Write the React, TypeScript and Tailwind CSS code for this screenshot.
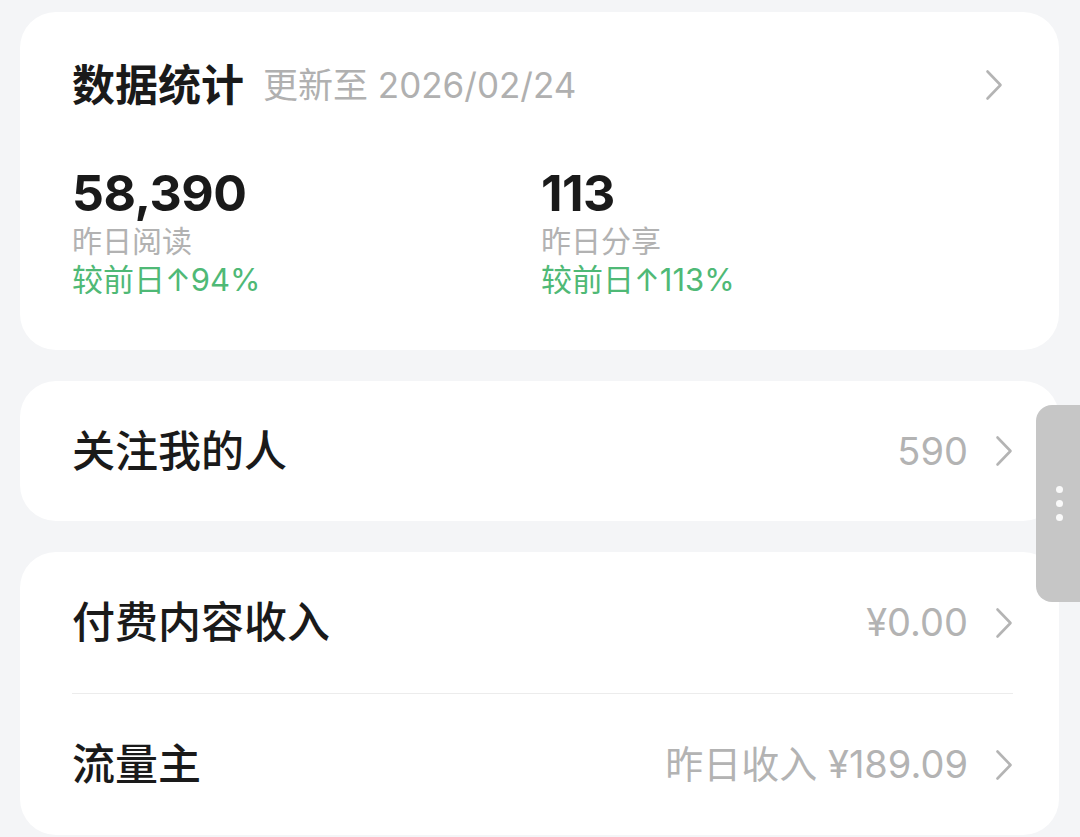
import React from 'react';

const Chevron: React.FC<{ className?: string }> = ({ className }) => (
  <svg className={className} width="18" height="32" viewBox="0 0 18 32" fill="none">
    <polyline
      points="2.5,2.5 15.5,16 2.5,29.5"
      stroke="#b4b4b4"
      strokeWidth="2.6"
      strokeLinecap="round"
      strokeLinejoin="round"
    />
  </svg>
);

interface StatProps {
  value: string;
  label: string;
  change: string;
}

const Stat: React.FC<StatProps> = ({ value, label, change }) => (
  <div className="flex flex-col">
    <span className="text-[50px] leading-[50px] font-bold text-[#1a1a1a] tracking-[-0.5px]">{value}</span>
    <span className="mt-[4px] text-[30px] leading-[38px] text-[#b2b2b2]">{label}</span>
    <span className="text-[31px] leading-[39px] text-[#4fb976]">{change}</span>
  </div>
);

interface RowProps {
  title: string;
  value: string;
}

const Row: React.FC<RowProps> = ({ title, value }) => (
  <div className="h-[141px] flex items-center justify-between pl-[52px] pr-[46px]">
    <span className="text-[43px] font-medium text-[#1a1a1a]">{title}</span>
    <div className="flex items-center">
      <span className="text-[38px] text-[#b3b3b3]">{value}</span>
      <Chevron className="ml-[27px]" />
    </div>
  </div>
);

export default function App() {
  return (
    <div className="relative w-[1080px] h-[837px] overflow-hidden bg-[#f4f5f7] pl-[20px] pr-[21px] pt-[12px] font-[Inter,'Noto_Sans_CJK_SC',sans-serif]">
      <div className="flex flex-col gap-[31px]">
        {/* Stats card */}
        <div className="rounded-[36px] bg-white pl-[52px] pr-[56px] pt-[49px] pb-[51px]">
          <div className="h-[48px] flex items-center justify-between">
            <div className="flex items-center">
              <span className="text-[43px] leading-[48px] font-bold text-[#1a1a1a]">数据统计</span>
              <span className="ml-[19px] text-[35px] leading-[48px] text-[#b0b0b0]">更新至 2026/02/24</span>
            </div>
            <Chevron />
          </div>
          <div className="mt-[59px] grid grid-cols-[469px_1fr]">
            <Stat value="58,390" label="昨日阅读" change="较前日↑94%" />
            <Stat value="113" label="昨日分享" change="较前日↑113%" />
          </div>
        </div>

        {/* Followers */}
        <div className="rounded-[36px] bg-white h-[140px] flex items-center justify-between pl-[52px] pr-[46px]">
          <span className="text-[43px] font-medium text-[#1a1a1a]">关注我的人</span>
          <div className="flex items-center">
            <span className="text-[38px] text-[#b3b3b3]">590</span>
            <Chevron className="ml-[27px]" />
          </div>
        </div>

        {/* Income */}
        <div className="rounded-[36px] bg-white">
          <Row title="付费内容收入" value="¥0.00" />
          <div className="ml-[52px] mr-[46px] h-px bg-[#ececec]" />
          <Row title="流量主" value="昨日收入 ¥189.09" />
        </div>
      </div>

      {/* Floating side handle */}
      <div className="absolute right-0 top-[405px] w-[44px] h-[197px] rounded-l-[16px] bg-[#c6c6c6] flex flex-col items-center justify-center gap-[7px] pl-[2px]">
        <span className="w-[7px] h-[7px] rounded-full bg-white/90" />
        <span className="w-[7px] h-[7px] rounded-full bg-white/90" />
        <span className="w-[7px] h-[7px] rounded-full bg-white/90" />
      </div>
    </div>
  );
}
